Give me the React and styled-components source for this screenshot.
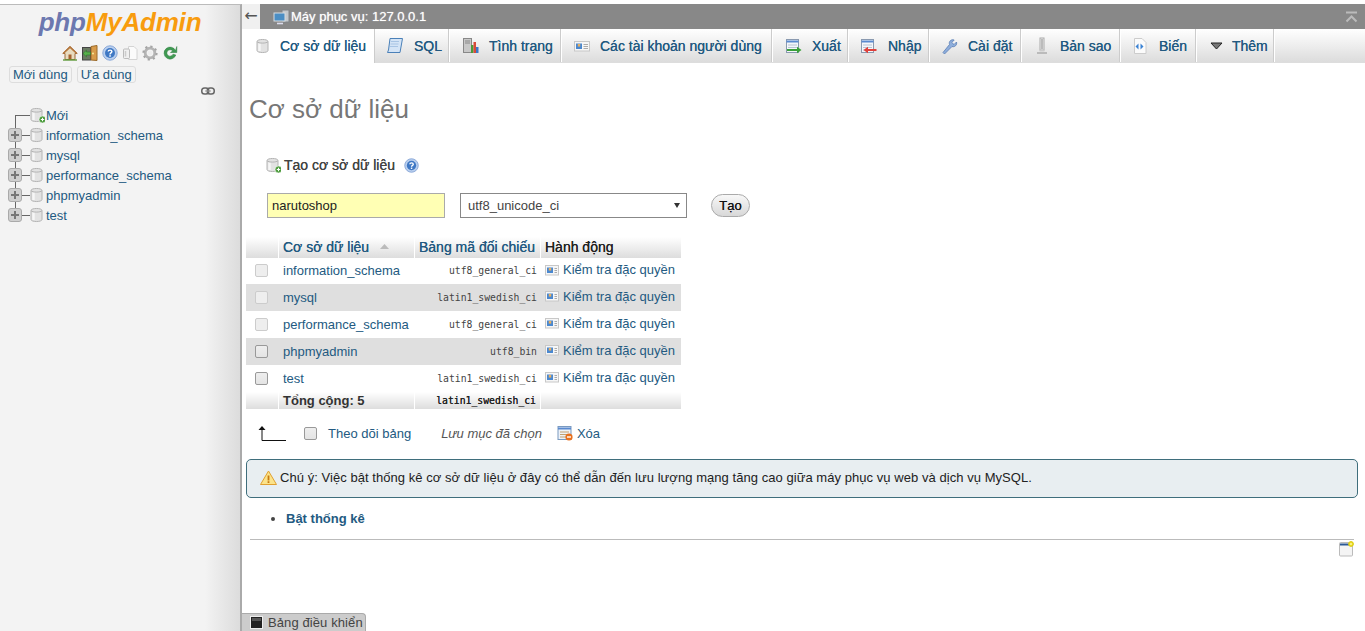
import React from "react";
import styled, { createGlobalStyle } from "styled-components";

const GlobalStyle = createGlobalStyle`
  html, body {
    margin: 0;
    height: 100%;
    overflow: hidden;
    background: #fff;
    font-family: "Liberation Sans", Arial, sans-serif;
    font-size: 13px;
    color: #444;
  }
  * { box-sizing: border-box; }
`;

const Page = styled.div`
  display: flex;
  height: 631px;
  padding-top: 4px;
`;

/* ---------- sidebar ---------- */
const Sidebar = styled.aside`
  width: 242px;
  flex: none;
  border-top: 1px solid #bbb;
  border-right: 2px solid #aaa;
  background: linear-gradient(to right, #f3f3f3 0, #f3f3f3 205px, #dcdcdc 240px);
  display: flex;
  flex-direction: column;
`;

const Logo = styled.div`
  height: 34px;
  text-align: center;
  font-size: 26px;
  font-weight: bold;
  font-style: italic;
  line-height: 34px;
  letter-spacing: -0.2px;
  color: #f89c0e;
  span { color: #6c78af; }
`;

const IconRow = styled.div`
  display: flex;
  justify-content: center;
  gap: 4px;
  height: 16px;
  margin-top: 6px;
  padding-right: 1px;
`;

const PrefRow = styled.div`
  display: flex;
  gap: 5px;
  padding-left: 9px;
  margin-top: 5px;
`;

const PrefButton = styled.a`
  height: 17px;
  line-height: 15px;
  padding: 0 3px;
  border: 1px solid #ddd;
  border-radius: 3px;
  color: #235a81;
  font-size: 13px;
  white-space: nowrap;
`;

const LinkIconRow = styled.div`
  display: flex;
  justify-content: flex-end;
  padding-right: 25px;
  height: 10px;
  margin-top: 4px;
`;

const Tree = styled.div`
  margin-top: 8px;
  display: flex;
  flex-direction: column;
`;

const TreeRow = styled.div`
  position: relative;
  display: flex;
  align-items: center;
  height: 20px;
  padding-left: ${(p) => (p.$new ? "30px" : "8px")};
  color: #235a81;

  &::before {
    content: "";
    position: absolute;
    left: 15px;
    top: ${(p) => (p.$new ? "10px" : "0")};
    height: ${(p) => (p.$new ? "10px" : p.$last ? "10px" : "20px")};
    width: 1px;
    background: #666;
  }
  &::after {
    content: "";
    position: absolute;
    left: 15px;
    top: 10px;
    width: 15px;
    height: 1px;
    background: #666;
  }
`;

const Expander = styled.span`
  position: relative;
  z-index: 1;
  flex: none;
  width: 14px;
  height: 14px;
  margin-right: 8px;
  border: 1px solid #aaa;
  border-radius: 3px;
  background: #cfcfcf;

  &::before, &::after {
    content: "";
    position: absolute;
    background: #777;
  }
  &::before { left: 2px; top: 5px; width: 8px; height: 2px; }
  &::after { left: 5px; top: 2px; width: 2px; height: 8px; }
`;

const TreeIcon = styled.span`
  position: relative;
  z-index: 1;
  display: flex;
  flex: none;
  margin-right: 1px;
`;

/* ---------- main ---------- */
const Main = styled.main`
  flex: 1;
  min-width: 0;
  display: flex;
  flex-direction: column;
  position: relative;
`;

const ServerBar = styled.div`
  height: 25px;
  background: #888;
  display: flex;
  align-items: center;
  color: #fff;
  font-size: 13px;
`;

const BackButton = styled.div`
  width: 18px;
  height: 25px;
  margin-right: 13px;
  background: #f0f0f0;
  color: #555;
  font-family: "DejaVu Sans", sans-serif;
  font-size: 16px;
  line-height: 24px;
  text-align: center;
`;

const ServerLabel = styled.span`
  margin-left: 1px;
  text-shadow: 0 0 1px #ddd;
`;

const CollapseIcon = styled.span`
  display: flex;
  margin-left: auto;
  margin-right: 7px;
`;

const TabBar = styled.nav`
  height: 34px;
  display: flex;
  background: linear-gradient(#fff, #dcdcdc);
  border-bottom: 1px solid #ddd;
`;

const Tab = styled.a`
  width: ${(p) => p.$w}px;
  flex: none;
  display: flex;
  align-items: center;
  padding-left: ${(p) => p.$pad}px;
  gap: ${(p) => p.$gap}px;
  border-right: 1px solid #fff;
  box-shadow: inset -1px 0 0 #ccc;
  color: #235a81;
  font-size: 14px;
  text-shadow: 0 0 .5px #235a81;
  white-space: nowrap;
  ${(p) => p.$active && "background: #fff; height: 34px; margin-bottom: -1px; border-right: 1px solid #ccc; box-shadow: none;"}
`;

const Content = styled.div`
  flex: 1;
  padding: 0 7px 0 4px;
  display: flex;
  flex-direction: column;
`;

const Title = styled.h2`
  margin: 31px 0 0 3px;
  height: 30px;
  line-height: 30px;
  font-size: 26px;
  font-weight: normal;
  color: #777;
`;

const CreateHeading = styled.div`
  display: flex;
  align-items: center;
  margin: 32px 0 0 20px;
  height: 18px;
  font-size: 14px;
  color: #444;
  text-shadow: 0 0 .5px #444;
  gap: 3px;
`;

const HeadingHelp = styled.span`
  display: flex;
  margin-left: 6px;
`;

const CreateForm = styled.form`
  display: flex;
  align-items: center;
  margin: 19px 0 0 21px;
`;

const NameInput = styled.input`
  width: 178px;
  height: 25px;
  padding: 0 4px;
  border: 1px solid #aaa;
  background: #ffffb4;
  font: 13px "Liberation Sans", Arial, sans-serif;
  color: #222;
  outline: none;
`;

const SelectWrap = styled.div`
  position: relative;
  margin-left: 15px;
  display: flex;

  &::after {
    content: "";
    position: absolute;
    right: 7px;
    top: 10px;
    border-style: solid;
    border-width: 5px 3.5px 0;
    border-color: #333 transparent transparent;
    pointer-events: none;
  }
`;

const CollationSelect = styled.select`
  appearance: none;
  width: 227px;
  height: 25px;
  padding-left: 7px;
  border: 1px solid #888;
  border-radius: 0;
  background: #fff;
  font: 13px "Liberation Sans", Arial, sans-serif;
  color: #444;
`;

const CreateButton = styled.button`
  width: 39px;
  height: 23px;
  margin-left: 24px;
  padding: 0;
  border: 1px solid #aaa;
  border-radius: 12px;
  background: linear-gradient(#f8f8f8, #d8d8d8);
  font: 13px "Liberation Sans", Arial, sans-serif;
  color: #111;
  text-shadow: 0 0 .5px #333;
`;

const DbTable = styled.div`
  width: 435px;
  margin-top: 19px;
  display: flex;
  flex-direction: column;
`;

const columns = "33px 136px 126px 140px";

const HeadRow = styled.div`
  display: grid;
  grid-template-columns: ${columns};
  height: 21px;
`;

const HeadCell = styled.div`
  display: flex;
  align-items: center;
  gap: 11px;
  padding: 0 0 2px 4px;
  border-right: 1px solid #fff;
  background: linear-gradient(#fff, #ddd);
  font-size: 14px;
  color: ${(p) => (p.$plain ? "#222" : "#235a81")};
  text-shadow: 0 0 .4px currentColor;
  white-space: nowrap;
  &:last-child { border-right: 0; }
`;

const DbRow = styled.div`
  display: grid;
  grid-template-columns: ${columns};
  align-items: center;
  height: ${(p) => (p.$first ? 26 : 27)}px;
  padding-bottom: ${(p) => (p.$first ? 2 : 0)}px;
  background: ${(p) => (p.$even ? "#dfdfdf" : "#fff")};
`;

const CheckCell = styled.div`
  display: flex;
  padding-left: 9px;
`;

const Check = styled.input.attrs({ type: "checkbox" })`
  appearance: none;
  width: 13px;
  height: 13px;
  margin: 0;
  border: 1px solid ${(p) => (p.disabled ? "#ccc" : "#999")};
  border-radius: 2px;
  background: ${(p) => (p.disabled ? "#eee" : "linear-gradient(#eee, #e4e4e4)")};
`;

const DbName = styled.a`
  padding-left: 4px;
  color: #235a81;
  white-space: nowrap;
`;

const Collation = styled.div`
  padding-right: 4px;
  text-align: right;
  font-family: "DejaVu Sans Mono", "Liberation Mono", monospace;
  font-size: 9.75px;
  color: #444;
`;

const ActionLink = styled.a`
  display: flex;
  align-items: center;
  gap: 4px;
  margin-top: ${(p) => (p.$first ? -1 : -3)}px;
  padding-left: 4px;
  color: #235a81;
  white-space: nowrap;
`;

const FootRow = styled.div`
  display: grid;
  grid-template-columns: ${columns};
  align-items: center;
  height: 17px;
`;

const FootCell = styled.div`
  height: 17px;
  line-height: 17px;
  padding-left: 4px;
  border-right: 1px solid #fff;
  background: linear-gradient(#fff, #ddd);
  font-weight: bold;
  color: #333;
  white-space: nowrap;
  &:last-child { border-right: 0; }
`;

const FootMono = styled(FootCell)`
  padding: 0 4px 0 0;
  text-align: right;
  font-family: "DejaVu Sans Mono", "Liberation Mono", monospace;
  font-size: 9.75px;
  font-weight: normal;
  text-shadow: 0 0 .5px #222;
  color: #222;
`;

const ActionsRow = styled.div`
  display: flex;
  align-items: center;
  height: 24px;
  margin: 12px 0 0 12px;
  color: #235a81;
`;

const CheckLabel = styled.label`
  display: flex;
  align-items: center;
  gap: 11px;
  margin-left: 18px;
`;

const SavedLabel = styled.em`
  margin-left: 30px;
  color: #555;
`;

const DeleteLink = styled.a`
  display: flex;
  align-items: center;
  gap: 4px;
  margin-left: 15px;
`;

const Notice = styled.div`
  display: flex;
  align-items: center;
  gap: 3px;
  height: 39px;
  margin-top: 14px;
  padding: 0 0 2px 13px;
  border: 1px solid #3f6e7c;
  border-radius: 5px;
  background: #e8eef1;
  color: #222;
  letter-spacing: .05px;
`;

const List = styled.ul`
  margin: 13px 0 0;
  padding: 0 0 0 40px;
  list-style: disc;
  height: 16px;
  line-height: 16px;
`;

const ListLink = styled.a`
  color: #235a81;
  font-weight: bold;
`;

const Rule = styled.hr`
  margin: 12px 4px 0;
  border: 0;
  border-top: 1px solid #bbb;
`;

const SettingsIcon = styled.div`
  display: flex;
  justify-content: flex-end;
  margin-top: 1px;
  padding-right: 4px;
`;

const ConsoleBar = styled.div`
  position: absolute;
  left: 0;
  bottom: 0;
  display: flex;
  align-items: center;
  gap: 5px;
  width: 124px;
  height: 18px;
  padding-left: 8px;
  background: #ccc;
  border: 1px solid #aaa;
  border-width: 1px 1px 0 0;
  border-top-right-radius: 4px;
  color: #444;
  letter-spacing: .1px;
  white-space: nowrap;
`;

/* ---------- icons ---------- */
const Svg = ({ w = 16, h = 16, children }) => (
  <svg width={w} height={h} viewBox={`0 0 ${w} ${h}`} style={{ flex: "none" }}>
    {children}
  </svg>
);

const Badge = () => (
  <g>
    <circle cx="12.5" cy="12.5" r="3.5" fill="#4a9a3a" stroke="#fff" strokeWidth=".6" />
    <path d="M10.8 12.5h3.4M12.5 10.8v3.4" stroke="#fff" strokeWidth="1.1" />
  </g>
);

const DbIcon = ({ plus }) => (
  <Svg w={15} h={16}>
    <path d="M1 3.5C1 .8 12 .8 12 3.5V12.5C12 15.2 1 15.2 1 12.5Z" fill="#e2e2e2" stroke="#b4b4b4" />
    <path d="M3.5 5.5V13" stroke="#f6f6f6" strokeWidth="2.4" />
    <path d="M1 3.6C2.5 5.6 10.5 5.6 12 3.6" fill="none" stroke="#b4b4b4" />
    {plus && <Badge />}
  </Svg>
);

const HomeIcon = () => (
  <Svg>
    <path d="M8 1.5L.8 8.5H3V14.5H13V8.5H15.2Z" fill="#e8dcc0" stroke="#9c6a3a" />
    <path d="M8 1L.5 8.3 2 8.8 8 3.2 14 8.8 15.5 8.3Z" fill="#b5763c" />
    <rect x="6.5" y="9.5" width="3" height="5" fill="#a5622f" />
    <path d="M1 15h14" stroke="#5f9a3c" strokeWidth="1.4" />
  </Svg>
);

const ExitIcon = () => (
  <Svg>
    <rect x="0.5" y="2.5" width="8" height="12.5" fill="#6a7a62" stroke="#444" />
    <path d="M9 1.5L15 .5V15.5L9 15Z" fill="#d89b4a" stroke="#9a6a2a" />
    <circle cx="11" cy="8.5" r=".9" fill="#fff2a0" />
    <path d="M1 8.5L4.5 5.2V7H8.5V10H4.5V11.8Z" fill="#58b04c" stroke="#2c7a2c" strokeWidth=".6" />
  </Svg>
);

const HelpIcon = ({ size = 16 }) => (
  <svg width={size} height={size} viewBox="0 0 16 16" style={{ flex: "none" }}>
    <circle cx="8" cy="8" r="7.2" fill="#b9cfee" stroke="#8aa8d8" />
    <circle cx="8" cy="8" r="5" fill="#3f78c4" />
    <path d="M6.2 6.6C6.2 4.6 9.9 4.6 9.9 6.6 9.9 8 8 7.8 8 9.4" fill="none" stroke="#fff" strokeWidth="1.4" />
    <rect x="7.3" y="10.2" width="1.5" height="1.5" fill="#fff" />
  </svg>
);

const DocsIcon = () => (
  <Svg>
    <path d="M6.5 1.5H12L15 4.5V14.5H6.5Z" fill="#fbfbfb" stroke="#d4d4d4" />
    <rect x="1.5" y="4" width="6" height="9.5" rx="1" fill="#f0f0f0" stroke="#bbb" />
    <path d="M3.5 6V11.5" stroke="#ccc" strokeWidth="1.5" />
  </Svg>
);

const GearIcon = () => (
  <Svg>
    <circle cx="8" cy="8" r="4.8" fill="none" stroke="#b4b4b4" strokeWidth="2.8" />
    <circle cx="8" cy="8" r="6.6" fill="none" stroke="#a4a4a4" strokeWidth="2" strokeDasharray="2.2 3" />
    <circle cx="8" cy="8" r="2.2" fill="#eee" />
  </Svg>
);

const ReloadIcon = () => (
  <Svg>
    <path d="M13.5 5.5A6 6 0 1 0 13.8 10L11 9.2A3.2 3.2 0 1 1 10.6 6L8.5 7.5H14.8V1.5Z" fill="#3f9a52" stroke="#2a7a3c" strokeWidth=".5" />
  </Svg>
);

const LinkIcon = () => (
  <Svg w={14} h={8}>
    <rect x=".75" y="1" width="7" height="6" rx="2.8" fill="none" stroke="#666" strokeWidth="1.5" />
    <rect x="6.25" y="1" width="7" height="6" rx="2.8" fill="none" stroke="#666" strokeWidth="1.5" />
    <path d="M4 4h6" stroke="#999" />
  </Svg>
);

const ServerIcon = () => (
  <Svg w={17} h={16}>
    <rect x="9" y="1" width="7" height="12" fill="#c4c8cc" stroke="#808488" />
    <rect x="1" y="4" width="11" height="8" fill="#4b8ec4" stroke="#d8dce0" />
    <path d="M4 14.5h6" stroke="#dde" strokeWidth="1.6" />
  </Svg>
);

const CollapseUp = () => (
  <Svg w={13} h={12}>
    <path d="M1 1.5h11" stroke="#bbb" strokeWidth="2" />
    <path d="M1.5 10.5L6.5 5.5 11.5 10.5" fill="none" stroke="#bbb" strokeWidth="2" />
  </Svg>
);

const SqlIcon = () => (
  <Svg w={18} h={18}>
    <path d="M4 1.5H16.5L14 15.5H1.5L2.5 13Z" fill="#d4e4f6" stroke="#4a80b8" />
    <path d="M5 4.5h8M4.5 7h8M4 9.5h8" stroke="#a8c4e4" />
  </Svg>
);

const StatusIcon = () => (
  <Svg w={18} h={18}>
    <rect x="1.5" y="1.5" width="8" height="14" fill="#c8c8c8" stroke="#888" />
    <path d="M3 4h5M3 6h5" stroke="#888" />
    <rect x="9" y="8" width="2.5" height="8" fill="#4a9a3a" />
    <rect x="11.5" y="5" width="2.5" height="11" fill="#d84a3a" />
    <rect x="14" y="10" width="2.5" height="6" fill="#3a78c8" />
  </Svg>
);

const UsersIcon = ({ w = 16 }) => (
  <Svg w={w} h={12}>
    <rect x=".5" y="1.5" width={w - 1} height="9.5" fill="#f6f6f6" stroke="#c8c8c8" />
    <rect x="2" y="3.5" width="6" height="5.5" fill="#4a88d0" />
    <rect x="3.8" y="4" width="2.4" height="2.6" fill="#e8b060" />
    <path d={`M9.5 4.5h${w - 11.5}M9.5 6.5h${w - 11.5}M9.5 8.5h${w - 11.5}`} stroke="#aaa" />
  </Svg>
);

const SheetIcon = ({ color, dir }) => (
  <Svg w={18} h={16}>
    <rect x="1.5" y="1.5" width="12" height="13" fill="#f4f6fa" stroke="#8a9ab0" />
    <path d="M1.5 3.5h12" stroke="#5a8ad0" strokeWidth="2" />
    <path d="M3 7h9M3 9.5h9M3 12h9" stroke="#b8c4d4" />
    {dir === "out" ? (
      <path d="M2 11h10V8.8L16.5 12 12 15.2V13H2Z" fill={color} />
    ) : (
      <path d="M16.5 11H8V8.8L3.5 12 8 15.2V13H16.5Z" fill={color} />
    )}
  </Svg>
);

const WrenchIcon = () => (
  <Svg w={18} h={18}>
    <path d="M2 15.5L3.5 17 11 9.5C13.5 10.5 16.5 8 15.5 5L13 7.5 10.8 5.5 13.2 3C10 2 7.5 4.5 8.5 7.5Z" fill="#8eaedc" stroke="#5a7eb4" strokeWidth=".8" />
  </Svg>
);

const ReplicationIcon = () => (
  <Svg w={16} h={18}>
    <rect x="6" y="1" width="4" height="12" fill="#eee" stroke="#aaa" />
    <path d="M8 2V12" stroke="#888" />
    <path d="M3 16h10" stroke="#bbb" strokeWidth="2" />
    <path d="M5.5 13.5h5" stroke="#ccc" strokeWidth="2" />
  </Svg>
);

const VarsIcon = () => (
  <Svg w={16} h={18}>
    <path d="M2.5 1.5H10L14 5.5V16.5H2.5Z" fill="#fbfbfb" stroke="#ccc" />
    <path d="M3.5 9.5L6.5 6.5V12.5Z" fill="#3a82d4" />
    <path d="M11.5 9.5L8.5 6.5V12.5Z" fill="#3a82d4" />
  </Svg>
);

const Caret = () => (
  <Svg w={13} h={8}>
    <path d="M1 1H12L6.5 7Z" fill="#777" stroke="#222" />
  </Svg>
);

const SortUp = () => (
  <Svg w={9} h={5}>
    <path d="M0 5L4.5 0 9 5Z" fill="#bbb" />
  </Svg>
);

const ArrowUp = () => (
  <Svg w={28} h={18}>
    <path d="M4 2L.5 6H7.5Z" fill="#111" />
    <path d="M4 5V16.5H28" fill="none" stroke="#111" />
  </Svg>
);

const DeleteIcon = () => (
  <Svg w={16} h={16}>
    <rect x="1" y="1.5" width="13" height="13" fill="#eef2f8" stroke="#7a9ac0" />
    <path d="M1 3.5h13" stroke="#5a8ad0" strokeWidth="2" />
    <path d="M3 7h9M3 9.5h9M3 12h9" stroke="#c4a070" />
    <circle cx="12" cy="12" r="3.6" fill="#e8701e" />
    <path d="M10 12h4" stroke="#fff" strokeWidth="1.4" />
  </Svg>
);

const WarningIcon = () => (
  <Svg w={17} h={15}>
    <path d="M8.5 1L16.5 14.5H.5Z" fill="#fbe38a" stroke="#e0a030" />
    <rect x="7.6" y="5.5" width="1.8" height="5" fill="#c87a10" />
    <rect x="7.6" y="11.2" width="1.8" height="1.8" fill="#c87a10" />
  </Svg>
);

const PageSettings = () => (
  <Svg w={15} h={16}>
    <rect x=".5" y="1.5" width="13" height="13.5" rx="1" fill="#f4f4f4" stroke="#bbb" />
    <path d="M1 3.5h9" stroke="#2d5a96" strokeWidth="2" />
    <circle cx="12" cy="3" r="2.4" fill="#f0e020" stroke="#d8c810" />
    <circle cx="12" cy="3" r=".8" fill="#fff" />
  </Svg>
);

const ConsoleIcon = () => (
  <Svg w={13} h={13}>
    <rect x=".5" y=".5" width="12" height="12" fill="#222" stroke="#eee" />
    <path d="M2 2h9v3H2Z" fill="#555" />
  </Svg>
);

/* ---------- data ---------- */
const tabs = [
  { label: "Cơ sở dữ liệu", w: 133, active: true, pad: 14, gap: 9, icon: <DbIcon /> },
  { label: "SQL", w: 75, pad: 11, gap: 10, icon: <SqlIcon /> },
  { label: "Tình trạng", w: 112, pad: 12, gap: 9, icon: <StatusIcon /> },
  { label: "Các tài khoản người dùng", w: 211, pad: 12, gap: 10, icon: <UsersIcon /> },
  { label: "Xuất", w: 76, pad: 12, gap: 9, icon: <SheetIcon color="#3aa03a" dir="out" /> },
  { label: "Nhập", w: 81, pad: 11, gap: 10, icon: <SheetIcon color="#e0403a" dir="in" /> },
  { label: "Cài đặt", w: 92, pad: 11, gap: 9, icon: <WrenchIcon /> },
  { label: "Bản sao", w: 99, pad: 12, gap: 10, icon: <ReplicationIcon /> },
  { label: "Biến", w: 76, pad: 11, gap: 11, icon: <VarsIcon /> },
  { label: "Thêm", w: 78, pad: 13, gap: 9, icon: <Caret /> },
];

const databases = [
  { name: "information_schema", collation: "utf8_general_ci", locked: true },
  { name: "mysql", collation: "latin1_swedish_ci", locked: true },
  { name: "performance_schema", collation: "utf8_general_ci", locked: true },
  { name: "phpmyadmin", collation: "utf8_bin" },
  { name: "test", collation: "latin1_swedish_ci" },
];

export default function App() {
  return (
    <>
      <GlobalStyle />
      <Page>
        <Sidebar>
          <Logo>
            <span>php</span>MyAdmin
          </Logo>
          <IconRow>
            <HomeIcon />
            <ExitIcon />
            <HelpIcon />
            <DocsIcon />
            <GearIcon />
            <ReloadIcon />
          </IconRow>
          <PrefRow>
            <PrefButton>Mới dùng</PrefButton>
            <PrefButton>Ưa dùng</PrefButton>
          </PrefRow>
          <LinkIconRow>
            <LinkIcon />
          </LinkIconRow>
          <Tree>
            <TreeRow $new>
              <TreeIcon>
                <DbIcon plus />
              </TreeIcon>
              Mới
            </TreeRow>
            {databases.map((db, i) => (
              <TreeRow key={db.name} $last={i === databases.length - 1}>
                <Expander />
                <TreeIcon>
                  <DbIcon />
                </TreeIcon>
                {db.name}
              </TreeRow>
            ))}
          </Tree>
        </Sidebar>

        <Main>
          <ServerBar>
            <BackButton>←</BackButton>
            <ServerIcon />
            <ServerLabel>Máy phục vụ: 127.0.0.1</ServerLabel>
            <CollapseIcon>
              <CollapseUp />
            </CollapseIcon>
          </ServerBar>
          <TabBar>
            {tabs.map((t) => (
              <Tab key={t.label} $w={t.w} $active={t.active} $pad={t.pad} $gap={t.gap}>
                {t.icon}
                {t.label}
              </Tab>
            ))}
          </TabBar>

          <Content>
            <Title>Cơ sở dữ liệu</Title>
            <CreateHeading>
              <DbIcon plus />
              Tạo cơ sở dữ liệu
              <HeadingHelp>
                <HelpIcon size={15} />
              </HeadingHelp>
            </CreateHeading>
            <CreateForm onSubmit={(e) => e.preventDefault()}>
              <NameInput defaultValue="narutoshop" />
              <SelectWrap>
                <CollationSelect defaultValue="utf8_unicode_ci">
                  <option>utf8_unicode_ci</option>
                </CollationSelect>
              </SelectWrap>
              <CreateButton>Tạo</CreateButton>
            </CreateForm>

            <DbTable>
              <HeadRow>
                <HeadCell />
                <HeadCell>
                  Cơ sở dữ liệu
                  <SortUp />
                </HeadCell>
                <HeadCell>Bảng mã đối chiếu</HeadCell>
                <HeadCell $plain>Hành động</HeadCell>
              </HeadRow>
              {databases.map((db, i) => (
                <DbRow key={db.name} $even={i % 2 === 1} $first={i === 0}>
                  <CheckCell>
                    <Check disabled={db.locked} />
                  </CheckCell>
                  <DbName>{db.name}</DbName>
                  <Collation>{db.collation}</Collation>
                  <ActionLink $first={i === 0}>
                    <UsersIcon w={14} />
                    Kiểm tra đặc quyền
                  </ActionLink>
                </DbRow>
              ))}
              <FootRow>
                <FootCell />
                <FootCell>Tổng cộng: 5</FootCell>
                <FootMono>latin1_swedish_ci</FootMono>
                <FootCell />
              </FootRow>
            </DbTable>

            <ActionsRow>
              <ArrowUp />
              <CheckLabel>
                <Check />
                Theo dõi bảng
              </CheckLabel>
              <SavedLabel>Lưu mục đã chọn</SavedLabel>
              <DeleteLink>
                <DeleteIcon />
                Xóa
              </DeleteLink>
            </ActionsRow>

            <Notice>
              <WarningIcon />
              Chú ý: Việc bật thống kê cơ sở dữ liệu ở đây có thể dẫn đến lưu lượng mạng tăng cao giữa máy phục vụ web và dịch vụ MySQL.
            </Notice>

            <List>
              <li>
                <ListLink>Bật thống kê</ListLink>
              </li>
            </List>
            <Rule />
            <SettingsIcon>
              <PageSettings />
            </SettingsIcon>
          </Content>

          <ConsoleBar>
            <ConsoleIcon />
            Bảng điều khiển
          </ConsoleBar>
        </Main>
      </Page>
    </>
  );
}
